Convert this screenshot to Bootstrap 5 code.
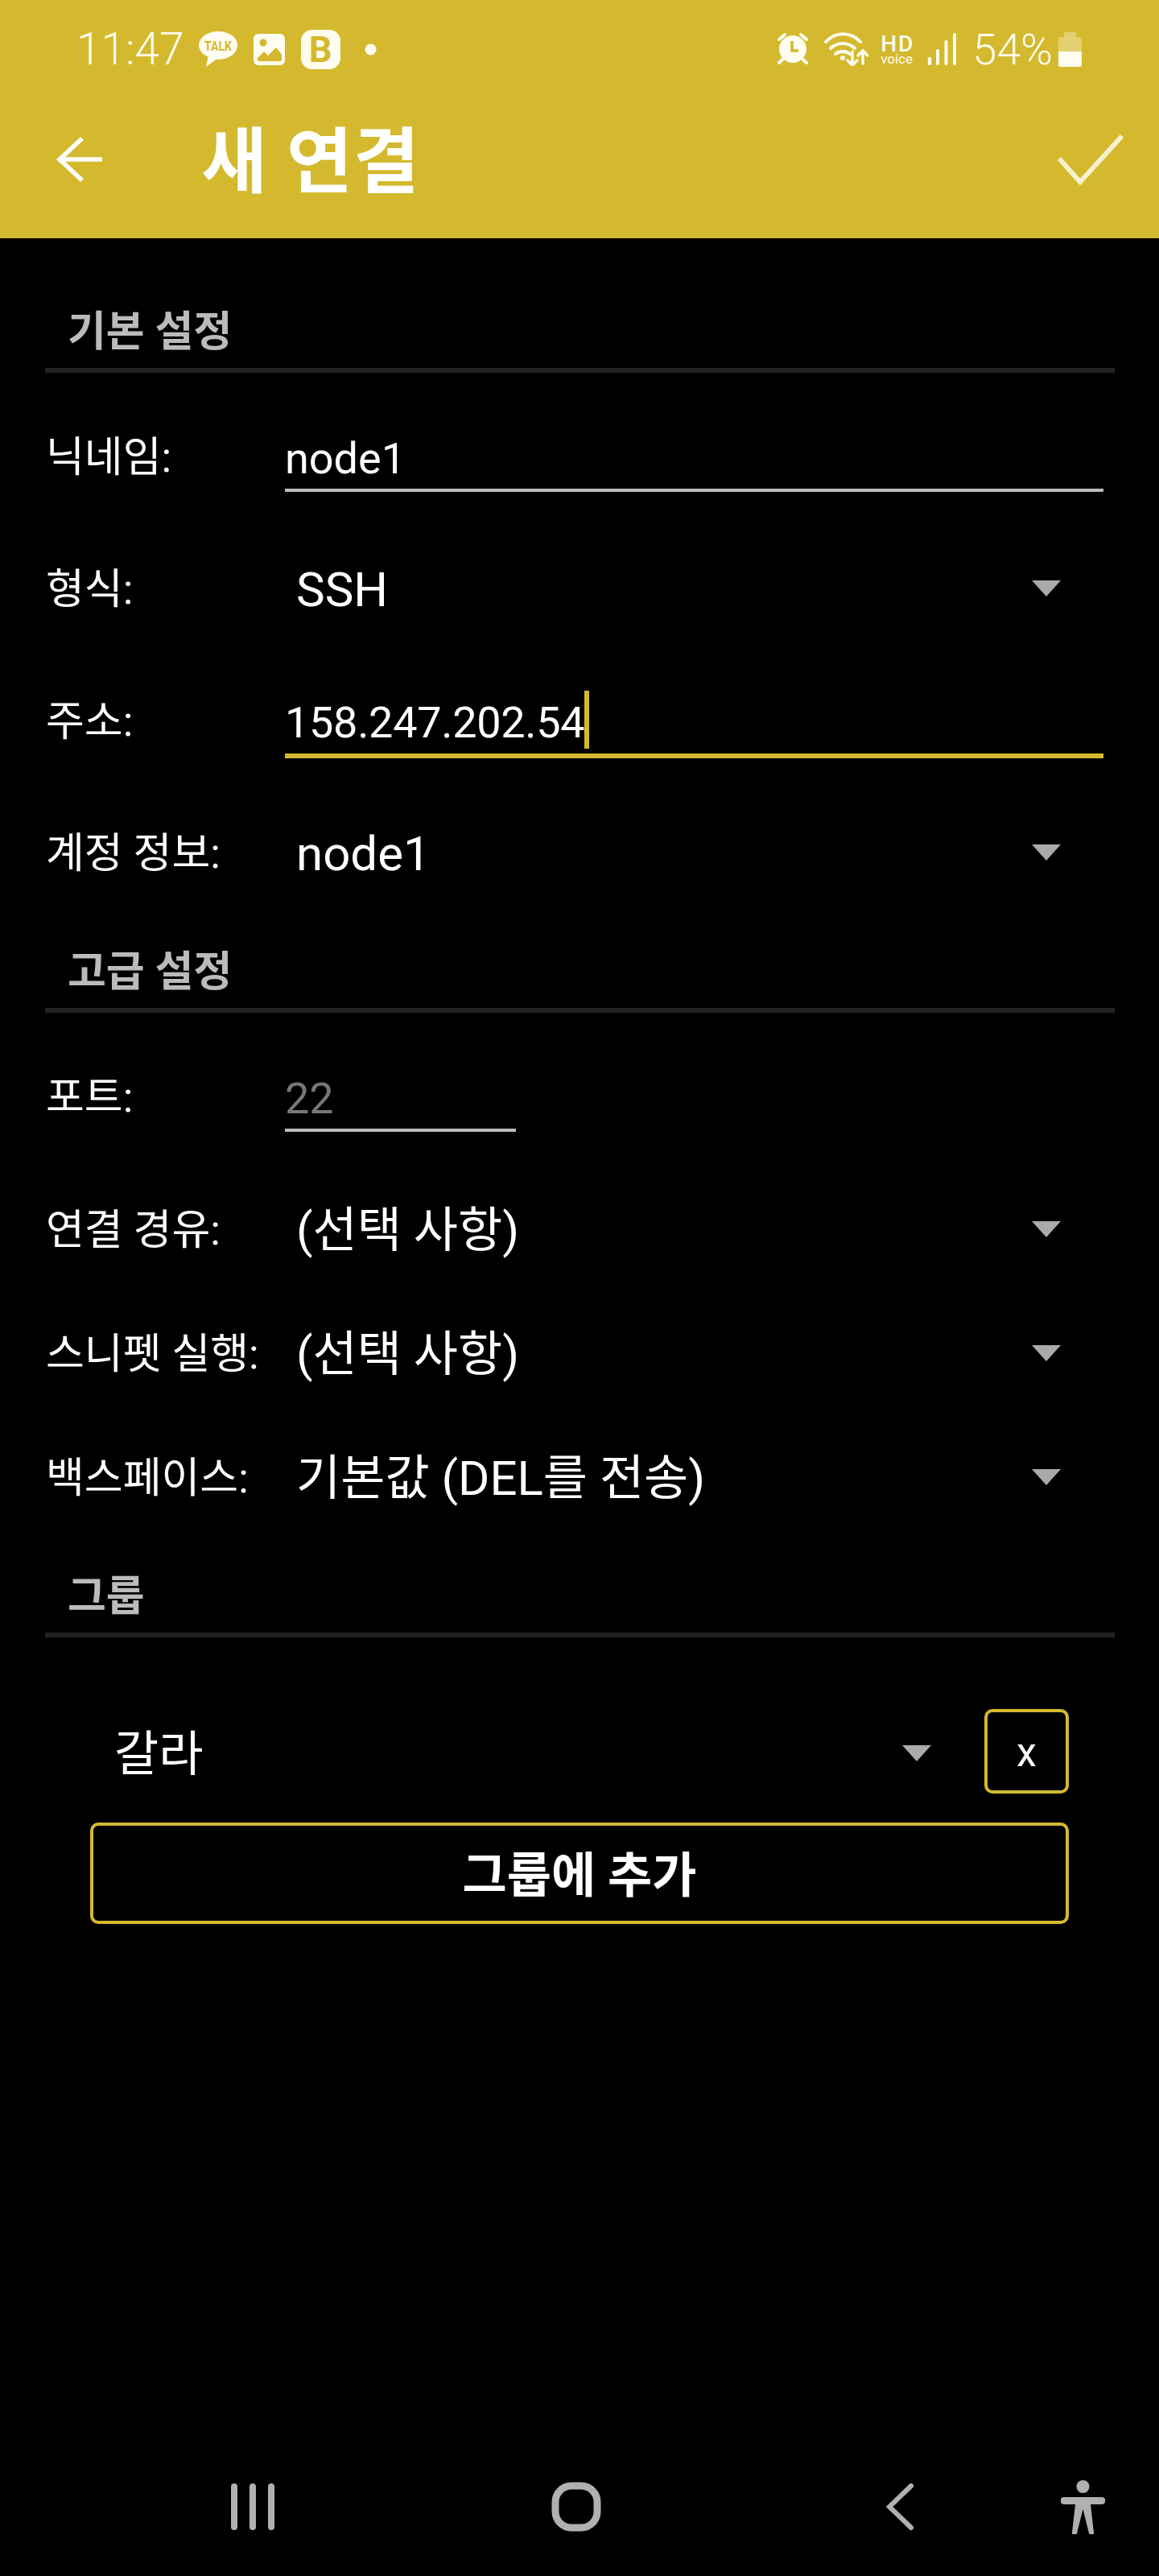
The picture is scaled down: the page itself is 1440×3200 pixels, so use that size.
<!DOCTYPE html>
<html lang="ko">
<head>
  <meta charset="UTF-8" />
  <meta name="viewport" content="width=device-width, initial-scale=1.0"/>
  <title>새 연결</title>
  <link href="https://cdn.jsdelivr.net/npm/bootstrap@5.3.0/dist/css/bootstrap.min.css" rel="stylesheet"/>
  <style>
    body {
      background-color: #000;
      color: #fff;
      font-family: Roboto, "Noto Sans CJK KR", sans-serif;
    }

    .app-screen { min-height: 100vh; }

    /* Cabecera */
    .app-header { background-color: #d4b92e; height: 296px; color: #fffcf0; }
    .status-bar { height: 120px; padding: 2px 96px 0 95px; font-weight: 300; }
    .status-time { font-size: 55px; }
    .status-pct { font-size: 54px; }
    .status-left svg, .status-right svg { display: block; flex: none; }
    .gap-time { margin-left: 18px; }
    .gap-img { margin-left: 20px; }
    .gap-b { margin-left: 20px; }
    .gap-dot { margin-left: 30px; }
    .gap-wifi { margin-left: 19px; }
    .gap-hd { margin-left: 15px; }
    .gap-signal { margin-left: 15px; }
    .gap-pct { margin-left: 20px; }
    .gap-batt { margin-left: 7px; }
    .b-tile {
      width: 49px;
      height: 49px;
      flex: none;
      border-radius: 14px;
      background-color: #fffcf0;
      color: #d4b92e;
      font-size: 45px;
      font-weight: 700;
      line-height: 1;
    }
    .hd-mark { width: 43px; margin-top: 2px; }
    .hd-top { font-size: 28px; font-weight: 500; line-height: 23px; letter-spacing: 2px; }
    .hd-sub { font-size: 17px; font-weight: 400; line-height: 15px; }
    .tool-bar { height: 176px; padding: 0 43px 20px 70px; }
    .tool-title { font-size: 89px; font-weight: 700; margin: 6px 0 0 122px; line-height: 1; letter-spacing: 1px; color: #fff; }

    /* Secciones */
    .sect-head {
      margin: 0 55px 0 56px;
      padding: 4px 0 14px 28px;
      border-bottom: 6px solid #222;
      color: #bbb;
      font-size: 52px;
      font-weight: 700;
      line-height: 60px;
    }
    .sect-first { margin-top: 83px; }
    .sect-second { margin-top: 35px; }
    .sect-third { margin-top: 40px; }
    .sect-body { padding-top: 20px; }

    .field-row { height: 164px; padding: 0 69px 0 57px; }
    .field-snug { height: 154px; }
    .field-port { height: 170px; padding-bottom: 6px; }
    .field-label { width: 297px; flex: none; font-size: 52px; padding-top: 8px; white-space: nowrap; }

    .text-field {
      height: 92px;
      padding-top: 12px;
      font-size: 54px;
      border-bottom: 4px solid #bbb;
    }
    .text-active { height: 98px; padding-top: 14px; border-bottom: 6px solid #d4b92e; letter-spacing: -.3px; }
    .text-short { width: 287px; flex: none; color: #777; }
    .caret-bar { width: 6px; height: 72px; background-color: #d4b92e; margin: -6px 0 0 0; }

    .spin-field { font-size: 60px; padding: 8px 53px 0 14px; white-space: nowrap; }
    .spin-arrow {
      width: 0;
      height: 0;
      flex: none;
      margin-top: -4px;
      border-left: 18px solid transparent;
      border-right: 18px solid transparent;
      border-top: 20px solid #aaa;
    }

    /* Grupo */
    .group-box { margin: 89px 112px 0 112px; }
    .group-spin { height: 105px; font-size: 60px; padding: 8px 66px 0 30px; }
    .outline-btn.btn {
      --bs-btn-color: #fff;
      --bs-btn-border-color: #d4b92e;
      --bs-btn-border-width: 4px;
      --bs-btn-border-radius: 10px;
      --bs-btn-padding-x: 0;
      --bs-btn-padding-y: 0;
      font-family: inherit;
    }
    .btn-x { width: 105px; height: 105px; flex: none; font-size: 50px; padding-top: 4px; }
    .btn-add { height: 126px; margin-top: 36px; font-size: 60px; font-weight: 700; padding-top: 8px; }

    /* Navegación */
    .nav-strip { height: 160px; padding: 0 67px 12px 287px; }
    .nav-strip svg { display: block; flex: none; }
    .gap-home { margin-left: 344px; }
    .gap-back { margin-left: 354px; }
    .gap-acc { margin-left: 183px; }
  </style>
</head>
<body>
  <div class="app-screen d-flex flex-column">

    <!-- Cabecera -->
    <header class="app-header">
      <div class="status-bar d-flex align-items-center justify-content-between">
        <div class="status-left d-flex align-items-center">
          <span class="status-time">11:47</span>
          <svg class="gap-time" width="48" height="44" viewBox="0 0 48 44">
            <path d="M24 0C10.700 0 0 7.600 0 17c0 6.300 4.600 11.600 11.500 14.600L9 44l12.500-9.200c.8 0 1.700.1 2.500.1 13.300 0 24-8 24-17.900S37.300 0 24 0z" fill="#fffcf0"/>
            <text x="24" y="24" text-anchor="middle" font-family="Roboto, sans-serif" font-size="17" font-weight="700" fill="#d4b92e" textLength="34" lengthAdjust="spacingAndGlyphs">TALK</text>
          </svg>
          <svg class="gap-img" width="39" height="39" viewBox="0 0 39 39">
            <rect width="39" height="39" rx="6" fill="#fffcf0"/>
            <circle cx="12" cy="11" r="4.500" fill="#d4b92e"/>
            <path d="M5 30l8-8 5 5 10-10 7 9v6a2 2 0 0 1-2 2H7a2 2 0 0 1-2-2z" fill="#d4b92e"/>
          </svg>
          <div class="b-tile gap-b d-flex align-items-center justify-content-center">B</div>
          <svg class="gap-dot" width="15" height="15" viewBox="0 0 15 15"><circle cx="7.500" cy="7.500" r="7" fill="#fffcf0"/></svg>
        </div>
        <div class="status-right d-flex align-items-center">
          <svg width="40" height="40" viewBox="0 0 40 40">
            <circle cx="21" cy="20" r="17" fill="#fffcf0"/>
            <path d="M20 10v12h8" fill="none" stroke="#d4b92e" stroke-width="3.500"/>
            <path d="M4 8l7-6M38 8l-7-6M8 33l-4 4M34 33l4 4" stroke="#fffcf0" stroke-width="4" stroke-linecap="round"/>
          </svg>
          <svg class="gap-wifi" width="56" height="42" viewBox="0 0 56 42">
            <g fill="none" stroke="#fffcf0" stroke-linecap="round">
              <path d="M3 12C15-1 34-1 46 12" stroke-width="4"/>
              <path d="M9 20c9-8 21-8 30 0" stroke-width="4"/>
              <path d="M15 27c5-4 13-4 18 0" stroke-width="4"/>
              <path d="M36 24v16M30 35l6 6 6-6" stroke-width="3.500"/>
              <path d="M49 39V24M43 29l6-6 6 6" stroke-width="3.500"/>
            </g>
            <circle cx="24" cy="32" r="3" fill="#fffcf0"/>
          </svg>
          <div class="hd-mark gap-hd d-flex flex-column">
            <span class="hd-top">HD</span>
            <span class="hd-sub">voice</span>
          </div>
          <svg class="gap-signal" width="36" height="40" viewBox="0 0 36 40">
            <g stroke="#fffcf0" stroke-width="4" stroke-linecap="round">
              <path d="M3 38V32" stroke-width="4.500"/>
              <path d="M13 38V22"/>
              <path d="M23.500 38V11"/>
              <path d="M34 38V2"/>
            </g>
          </svg>
          <span class="status-pct gap-pct">54%</span>
          <svg class="gap-batt" width="29" height="43" viewBox="0 0 29 43">
            <path d="M9 0h11a2 2 0 0 1 2 2v4h4a3 3 0 0 1 3 3v31a3 3 0 0 1-3 3H3a3 3 0 0 1-3-3V9a3 3 0 0 1 3-3h4V2a2 2 0 0 1 2-2z" fill="#fffcf0" fill-opacity=".35"/>
            <path d="M0 24h29v16a3 3 0 0 1-3 3H3a3 3 0 0 1-3-3z" fill="#fffcf0"/>
          </svg>
        </div>
      </div>
      <div class="tool-bar d-flex align-items-center">
        <svg width="58" height="58" viewBox="0 0 58 58">
          <path d="M2 29h55M32 3L4 29l28 26" fill="none" stroke="#fff" stroke-width="5.500"/>
        </svg>
        <span class="tool-title">새 연결</span>
        <svg class="ms-auto" width="84" height="64" viewBox="0 0 84 64">
          <path d="M3 31l26 29L81 3" fill="none" stroke="#f6f0cf" stroke-width="6"/>
        </svg>
      </div>
    </header>

    <main class="flex-grow-1">
      <!-- Básico -->
      <div class="sect-head sect-first">기본 설정</div>
      <div class="sect-body">
        <div class="field-row d-flex align-items-center">
          <div class="field-label">닉네임:</div>
          <div class="text-field flex-grow-1 d-flex align-items-center">node1</div>
        </div>
        <div class="field-row d-flex align-items-center">
          <div class="field-label">형식:</div>
          <div class="spin-field flex-grow-1 d-flex align-items-center justify-content-between">SSH<span class="spin-arrow"></span></div>
        </div>
        <div class="field-row d-flex align-items-center">
          <div class="field-label">주소:</div>
          <div class="text-field text-active flex-grow-1 d-flex align-items-center">158.247.202.54<span class="caret-bar"></span></div>
        </div>
        <div class="field-row d-flex align-items-center">
          <div class="field-label">계정 정보:</div>
          <div class="spin-field flex-grow-1 d-flex align-items-center justify-content-between">node1<span class="spin-arrow"></span></div>
        </div>
      </div>

      <!-- Avanzado -->
      <div class="sect-head sect-second">고급 설정</div>
      <div class="sect-body">
        <div class="field-row field-port d-flex align-items-center">
          <div class="field-label">포트:</div>
          <div class="text-field text-short d-flex align-items-center">22</div>
        </div>
        <div class="field-row field-snug d-flex align-items-center">
          <div class="field-label">연결 경유:</div>
          <div class="spin-field flex-grow-1 d-flex align-items-center justify-content-between">(선택 사항)<span class="spin-arrow"></span></div>
        </div>
        <div class="field-row field-snug d-flex align-items-center">
          <div class="field-label">스니펫 실행:</div>
          <div class="spin-field flex-grow-1 d-flex align-items-center justify-content-between">(선택 사항)<span class="spin-arrow"></span></div>
        </div>
        <div class="field-row field-snug d-flex align-items-center">
          <div class="field-label">백스페이스:</div>
          <div class="spin-field flex-grow-1 d-flex align-items-center justify-content-between">기본값 (DEL를 전송)<span class="spin-arrow"></span></div>
        </div>
      </div>

      <!-- Grupo -->
      <div class="sect-head sect-third">그룹</div>
      <div class="group-box">
        <div class="d-flex align-items-center">
          <div class="group-spin flex-grow-1 d-flex align-items-center justify-content-between">갈라<span class="spin-arrow"></span></div>
          <button type="button" class="btn outline-btn btn-x">x</button>
        </div>
        <button type="button" class="btn outline-btn btn-add w-100">그룹에 추가</button>
      </div>
    </main>

    <!-- Navegación -->
    <footer class="nav-strip d-flex align-items-center">
      <svg width="54" height="58" viewBox="0 0 54 58">
        <path d="M4 4v50M27 4v50M50 4v50" stroke="#b0b0b0" stroke-width="8" stroke-linecap="round"/>
      </svg>
      <svg class="gap-home" width="62" height="62" viewBox="0 0 62 62">
        <rect x="5" y="5" width="52" height="52" rx="20" fill="none" stroke="#b0b0b0" stroke-width="9"/>
      </svg>
      <svg class="gap-back" width="34" height="58" viewBox="0 0 34 58">
        <path d="M31 3L4 29l27 26" fill="none" stroke="#b0b0b0" stroke-width="6" stroke-linecap="round"/>
      </svg>
      <svg class="gap-acc" width="55" height="67" viewBox="0 0 55 67">
        <circle cx="27.500" cy="8" r="8" fill="#b0b0b0"/>
        <path d="M4 21h47a4 4 0 0 1 0 9H37l4 35a3 3 0 0 1-6 1l-7.500-30L20 66a3 3 0 0 1-6-1l4-35H4a4 4 0 0 1 0-9z" fill="#b0b0b0"/>
      </svg>
    </footer>
  </div>

  <script src="https://cdn.jsdelivr.net/npm/bootstrap@5.3.0/dist/js/bootstrap.bundle.min.js"></script>
</body>
</html>
